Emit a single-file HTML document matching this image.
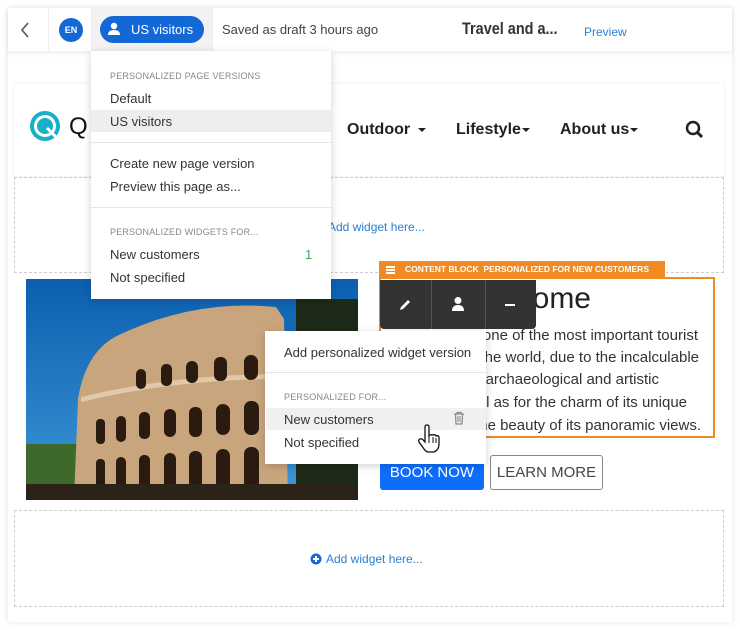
<!DOCTYPE html>
<html><head><meta charset="utf-8"><style>
*{box-sizing:border-box;margin:0;padding:0}
body{width:740px;height:630px;background:#fff;font-family:"Liberation Sans",sans-serif;position:relative;overflow:hidden;color:#333}
.abs{position:absolute}
.panel{left:8px;top:8px;width:724px;height:614px;background:#fff;box-shadow:0 0 6px rgba(0,0,0,.12)}
.topbar{left:8px;top:8px;width:724px;height:43px;background:#fff;box-shadow:0 2px 4px rgba(0,0,0,.08)}
.menu{background:#fff;box-shadow:0 2px 8px rgba(0,0,0,.18);font-size:13px;color:#333}
.lbl{font-size:9px;color:#888;letter-spacing:.2px}
.dash{border:1px dashed #ccc}
.nav{font-weight:bold;font-size:16px;color:#222;white-space:nowrap}
.car{display:inline-block;width:0;height:0;border-left:4px solid transparent;border-right:4px solid transparent;border-top:4px solid #222;vertical-align:middle;margin-left:3px}
.para{font-size:15px;color:#333;white-space:nowrap;text-align:right;position:absolute;right:0}
</style></head><body>
<div class="abs panel"></div>
<div class="abs topbar"></div>
<div class="abs" style="left:48px;top:8px;width:1px;height:43px;background:#eee"></div>
<svg class="abs" style="left:19px;top:21px" width="12" height="18"><path d="M9 2 L3 9 L9 16" stroke="#555" stroke-width="1.6" fill="none"/></svg>
<div class="abs" style="left:59px;top:18px;width:24px;height:24px;border-radius:50%;background:#1468d6;color:#fff;font-size:9px;font-weight:bold;text-align:center;line-height:24px">EN</div>
<div class="abs" style="left:91px;top:8px;width:122px;height:43px;background:#f2f2f2"></div>
<div class="abs" style="left:100px;top:16px;width:104px;height:27px;border-radius:14px;background:#1468d6;color:#fff;font-size:13px;line-height:27px;padding-left:31px">US visitors</div>
<svg class="abs" style="left:107px;top:22px" width="14" height="14"><circle cx="7" cy="4" r="3.2" fill="#fff"/><path d="M1 13 Q1 8 7 8 Q13 8 13 13Z" fill="#fff"/></svg>
<div class="abs" style="left:222px;top:22px;font-size:13px;color:#444">Saved as draft 3 hours ago</div>
<div class="abs" style="left:462px;top:19px;font-size:17px;font-weight:bold;color:#333;transform:scaleX(.85);transform-origin:left;white-space:nowrap">Travel and a...</div>
<div class="abs" style="left:584px;top:25px;font-size:12px;color:#2a7fd4">Preview</div>

<div class="abs" style="left:14px;top:84px;width:710px;height:92px;background:#fff;box-shadow:0 0 3px rgba(0,0,0,.1)"></div>
<svg class="abs" style="left:29px;top:110px" width="34" height="34"><circle cx="16" cy="16" r="13" fill="none" stroke="#16b0c8" stroke-width="4"/><circle cx="16" cy="16" r="8" fill="#16b0c8"/><path d="M18 18 L28 28" stroke="#fff" stroke-width="3"/></svg>
<div class="abs" style="left:69px;top:113px;font-size:24px;color:#111">Q</div>
<div class="abs nav" style="left:347px;top:121px">Outdoor <span class="car"></span></div>
<div class="abs nav" style="left:456px;top:121px">Lifestyle<span class="car" style="margin-left:1px"></span></div>
<div class="abs nav" style="left:560px;top:121px">About us<span class="car" style="margin-left:1px"></span></div>
<svg class="abs" style="left:685px;top:120px" width="20" height="20"><circle cx="8" cy="8" r="6" fill="none" stroke="#222" stroke-width="2.5"/><path d="M12 12 L17 17" stroke="#222" stroke-width="3"/></svg>

<div class="abs dash" style="left:14px;top:177px;width:710px;height:96px"></div>
<div class="abs" style="left:328px;top:220px;font-size:12px;color:#2a7fd4">Add widget here...</div>

<svg class="abs" style="left:26px;top:279px" width="332" height="221">
<defs><linearGradient id="sky" x1="0" y1="0" x2="0" y2="1"><stop offset="0" stop-color="#0b5fae"/><stop offset="1" stop-color="#3d97d8"/></linearGradient></defs>
<rect width="332" height="221" fill="url(#sky)"/>
<rect x="0" y="165" width="60" height="56" fill="#3d6a2a"/>
<rect x="270" y="20" width="62" height="201" fill="#1e2a18"/>
<path d="M48 221 L52 120 Q60 70 95 55 Q170 20 250 28 L258 40 L262 221Z" fill="#c9a57e"/>
<path d="M55 118 Q150 95 258 95 L258 100 Q150 100 55 123Z" fill="#e0c8a8"/>
<g fill="#2a1a10">
<rect x="110" y="90" width="10" height="20" rx="5"/><rect x="135" y="85" width="11" height="22" rx="5"/><rect x="160" y="82" width="12" height="22" rx="6"/><rect x="188" y="78" width="13" height="24" rx="6"/><rect x="218" y="76" width="14" height="25" rx="7"/>
<rect x="70" y="140" width="9" height="25" rx="4"/><rect x="90" y="137" width="10" height="26" rx="5"/><rect x="113" y="133" width="11" height="27" rx="5"/><rect x="138" y="130" width="12" height="28" rx="6"/><rect x="163" y="128" width="13" height="30" rx="6"/><rect x="190" y="125" width="14" height="31" rx="7"/><rect x="218" y="122" width="15" height="34" rx="7"/>
<rect x="70" y="180" width="9" height="30" rx="4"/><rect x="90" y="178" width="10" height="32" rx="5"/><rect x="113" y="176" width="11" height="34" rx="5"/><rect x="138" y="174" width="12" height="36" rx="6"/><rect x="163" y="172" width="13" height="38" rx="6"/><rect x="190" y="170" width="14" height="40" rx="7"/><rect x="218" y="168" width="15" height="42" rx="7"/>
</g>
<rect x="0" y="205" width="332" height="16" fill="#2b2218"/>
</svg>

<div class="abs" style="left:379px;top:261px;width:286px;height:16px;background:#f08a24;color:#fff;font-size:8.5px;line-height:16px;padding-left:26px;white-space:nowrap;font-weight:600">CONTENT BLOCK&nbsp;&nbsp;<b>PERSONALIZED FOR NEW CUSTOMERS</b></div>
<div class="abs" style="left:386px;top:266px;width:9px;height:1.5px;background:#fff;box-shadow:0 3px 0 #fff,0 6px 0 #fff"></div>
<div class="abs" style="left:379px;top:277px;width:336px;height:161px;border:2px solid #f08a24"></div>
<div class="abs" style="left:480px;top:282px;width:111px;font-size:30px;text-align:right;color:#222">Rome</div>
<div class="abs" style="left:486px;top:320px;width:227px;height:116px;overflow:hidden">
<div class="para" style="right:15px;top:7px">Rome is one of the most important tourist</div>
<div class="para" style="right:14px;top:29px">destinations in the world, due to the incalculable</div>
<div class="para" style="right:54px;top:51px">immensity of its archaeological and artistic</div>
<div class="para" style="right:26px;top:74px">treasures, as well as for the charm of its unique</div>
<div class="para" style="right:12px;top:97px">traditions and the beauty of its panoramic views.</div>
</div>
<div class="abs" style="left:380px;top:280px;width:156px;height:49px;background:#333;border-radius:0 0 4px 4px"></div>
<div class="abs" style="left:431px;top:280px;width:1px;height:49px;background:#555"></div>
<div class="abs" style="left:485px;top:280px;width:1px;height:49px;background:#555"></div>
<svg class="abs" style="left:398px;top:298px" width="14" height="14"><path d="M2 12 L3 9 L10 2 L12 4 L5 11Z" fill="#fff"/></svg>
<svg class="abs" style="left:451px;top:296px" width="14" height="16"><circle cx="7" cy="4.5" r="3.5" fill="#fff"/><path d="M1 15 Q1 9 7 9 Q13 9 13 15Z" fill="#fff"/></svg>
<div class="abs" style="left:505px;top:304px;width:10px;height:2px;background:#fff"></div>

<div class="abs" style="left:380px;top:455px;width:104px;height:35px;background:#0d6efd;border-radius:3px;color:#fff;font-size:15px;text-align:center;line-height:35px">BOOK NOW</div>
<div class="abs" style="left:490px;top:455px;width:113px;height:35px;border:1px solid #888;border-radius:3px;color:#444;font-size:15px;text-align:center;line-height:33px">LEARN MORE</div>

<div class="abs dash" style="left:14px;top:510px;width:710px;height:97px"></div>
<svg class="abs" style="left:310px;top:553px" width="12" height="12"><circle cx="6" cy="6" r="5.5" fill="#1468d6"/><path d="M6 3V9M3 6H9" stroke="#fff" stroke-width="2"/></svg>
<div class="abs" style="left:326px;top:552px;font-size:12px;color:#2a7fd4">Add widget here...</div>

<div class="abs menu" style="left:91px;top:51px;width:240px;height:248px"></div>
<div class="abs lbl" style="left:110px;top:71px">PERSONALIZED PAGE VERSIONS</div>
<div class="abs" style="left:110px;top:91px;font-size:13px">Default</div>
<div class="abs" style="left:91px;top:110px;width:240px;height:22px;background:#eee"></div>
<div class="abs" style="left:110px;top:114px;font-size:13px">US visitors</div>
<div class="abs" style="left:91px;top:142px;width:240px;height:1px;background:#e5e5e5"></div>
<div class="abs" style="left:110px;top:156px;font-size:13px">Create new page version</div>
<div class="abs" style="left:110px;top:179px;font-size:13px">Preview this page as...</div>
<div class="abs" style="left:91px;top:207px;width:240px;height:1px;background:#e5e5e5"></div>
<div class="abs lbl" style="left:110px;top:227px">PERSONALIZED WIDGETS FOR...</div>
<div class="abs" style="left:110px;top:247px;font-size:13px">New customers</div>
<div class="abs" style="left:305px;top:247px;font-size:13px;color:#3aaa5a">1</div>
<div class="abs" style="left:110px;top:270px;font-size:13px">Not specified</div>

<div class="abs menu" style="left:265px;top:331px;width:221px;height:133px"></div>
<div class="abs" style="left:284px;top:345px;font-size:13px">Add personalized widget version</div>
<div class="abs" style="left:265px;top:372px;width:221px;height:1px;background:#e5e5e5"></div>
<div class="abs lbl" style="left:284px;top:392px">PERSONALIZED FOR...</div>
<div class="abs" style="left:266px;top:408px;width:220px;height:22px;background:#f0f0f0"></div>
<div class="abs" style="left:284px;top:412px;font-size:13px">New customers</div>
<svg class="abs" style="left:453px;top:411px" width="12" height="14"><path d="M1 3H11M4 3V1.5H8V3M2.5 3.5L3 13H9L9.5 3.5" stroke="#888" stroke-width="1.2" fill="none"/><path d="M5 5V11M7 5V11" stroke="#888"/></svg>
<div class="abs" style="left:284px;top:435px;font-size:13px">Not specified</div>
<svg class="abs" style="left:416px;top:424px" width="26" height="30"><path d="M9 3 Q9 1 11 1 Q13 1 13 3 V12 Q15 10 17 11 Q19 10 20 12 Q22 11 23 13 V20 Q23 26 18 28 H13 Q10 28 8 25 L3 18 Q2 16 4 15 Q6 14 8 17 L9 18Z" fill="#fff" stroke="#111" stroke-width="1.3"/><path d="M13 13V19M17 13V19M20 14V19" stroke="#111" stroke-width="1"/></svg>
</body></html>
